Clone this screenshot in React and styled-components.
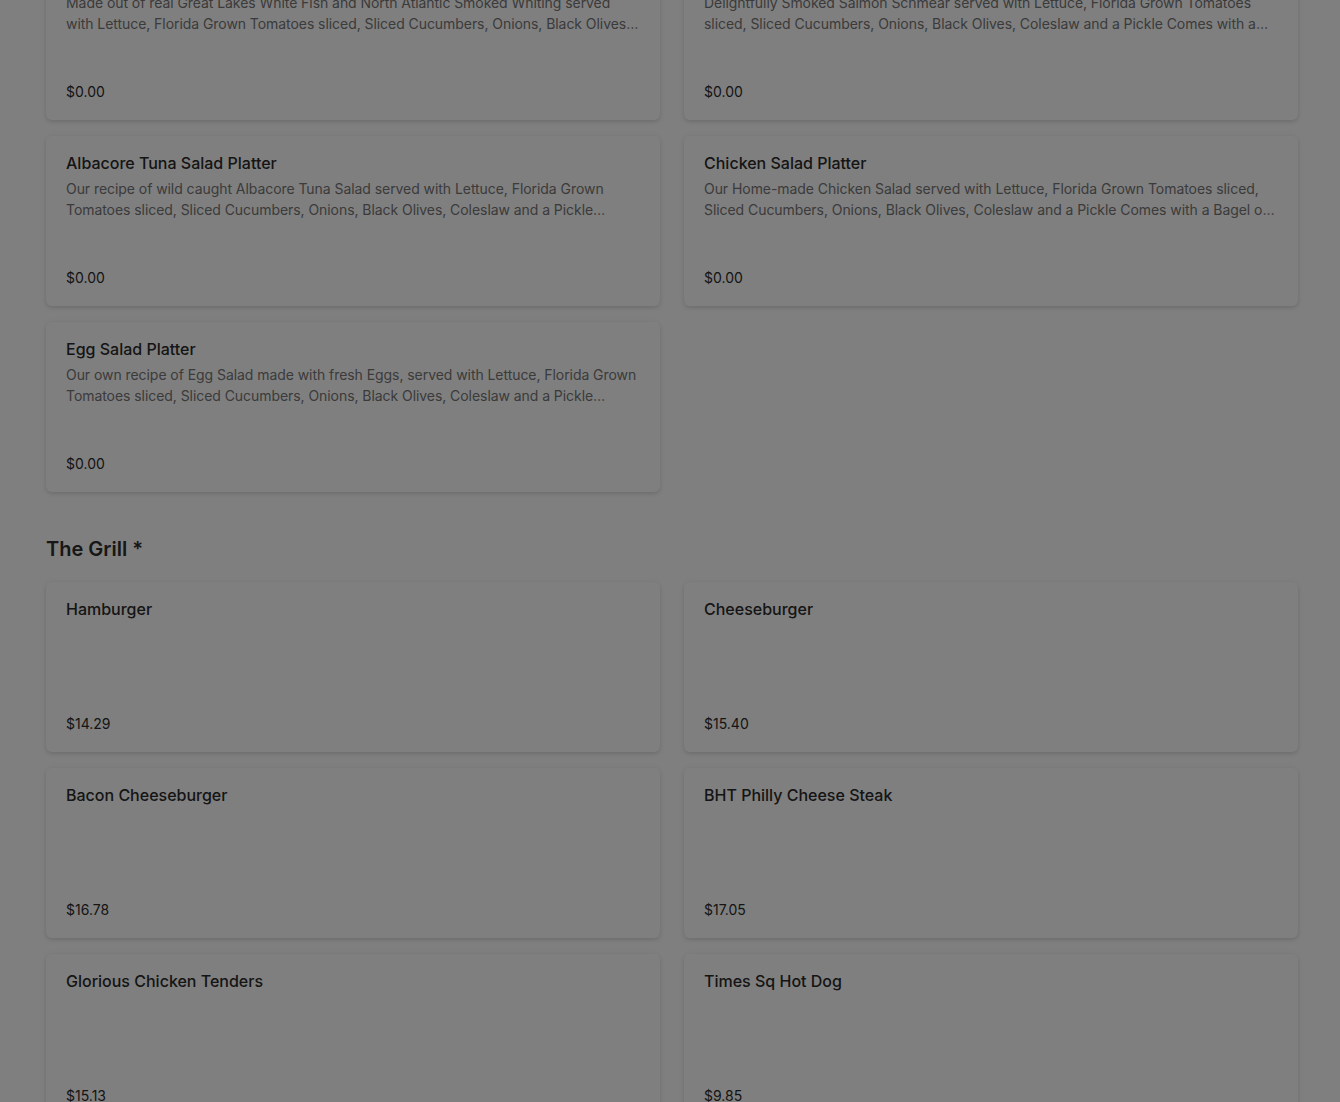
import React from 'react';
import styled, { createGlobalStyle } from 'styled-components';

const GlobalStyle = createGlobalStyle`
  html, body {
    margin: 0;
    padding: 0;
    background: #ffffff;
    font-family: Inter, "Liberation Sans", Arial, sans-serif;
    color: #333333;
    overflow: hidden;
  }
`;

const Page = styled.main`
  width: 1252px;
  padding: 0 42px 40px 46px;
  /* page is scrolled down a little */
  margin-top: -50px;
`;

const Section = styled.section`
  display: flex;
  flex-direction: column;
`;

const SectionTitle = styled.h2`
  margin: 43px 0 19px;
  font-size: 20px;
  line-height: 28px;
  font-weight: 600;
  color: #2e2e2e;
`;

const Grid = styled.div`
  display: grid;
  grid-template-columns: repeat(2, 614px);
  column-gap: 24px;
  row-gap: 16px;
`;

const Card = styled.article`
  box-sizing: border-box;
  height: 170px;
  padding: 16px 20px 18px;
  background: #ffffff;
  border-radius: 6px;
  box-shadow: 0 2px 4px rgba(0, 0, 0, 0.12), 0 0 10px rgba(0, 0, 0, 0.05);
  display: flex;
  flex-direction: column;
`;

const ItemName = styled.h3`
  margin: 0;
  font-size: 16px;
  line-height: 22px;
  font-weight: 500;
  color: #2b2b2b;
`;

const ItemDesc = styled.p`
  margin: 4px 0 0;
  font-size: 14px;
  line-height: 21px;
  letter-spacing: -0.06px;
  color: #767676;
  display: -webkit-box;
  -webkit-line-clamp: 2;
  -webkit-box-orient: vertical;
  overflow: hidden;
`;

const Price = styled.span`
  margin-top: auto;
  font-size: 14px;
  line-height: 20px;
  color: #2b2b2b;
`;

const Overlay = styled.div`
  position: fixed;
  inset: 0;
  background: rgba(0, 0, 0, 0.5);
`;

const tail =
  'served with Lettuce, Florida Grown Tomatoes sliced, Sliced Cucumbers, Onions, Black Olives, Coleslaw and a Pickle Comes with a Bagel of your choice';

const platters = [
  {
    name: 'Whitefish Salad Platter',
    desc: 'Made out of real Great Lakes White Fish and North Atlantic Smoked Whiting ' + tail,
    price: '$0.00',
  },
  {
    name: 'Nova Lox Platter',
    desc: 'Delightfully Smoked Salmon Schmear ' + tail,
    price: '$0.00',
  },
  {
    name: 'Albacore Tuna Salad Platter',
    desc: 'Our recipe of wild caught Albacore Tuna Salad ' + tail,
    price: '$0.00',
  },
  {
    name: 'Chicken Salad Platter',
    desc: 'Our Home-made Chicken Salad ' + tail,
    price: '$0.00',
  },
  {
    name: 'Egg Salad Platter',
    desc: 'Our own recipe of Egg Salad made with fresh Eggs, ' + tail,
    price: '$0.00',
  },
];

const grill = [
  { name: 'Hamburger', price: '$14.29' },
  { name: 'Cheeseburger', price: '$15.40' },
  { name: 'Bacon Cheeseburger', price: '$16.78' },
  { name: 'BHT Philly Cheese Steak', price: '$17.05' },
  { name: 'Glorious Chicken Tenders', price: '$15.13' },
  { name: 'Times Sq Hot Dog', price: '$9.85' },
];

const MenuItem = ({ item }) => (
  <Card>
    <ItemName>{item.name}</ItemName>
    {item.desc && <ItemDesc>{item.desc}</ItemDesc>}
    <Price>{item.price}</Price>
  </Card>
);

const App = () => {
  return (
    <>
      <GlobalStyle />
      <Page>
        <Section>
          <Grid>
            {platters.map(p => (
              <MenuItem key={p.name} item={p} />
            ))}
          </Grid>
        </Section>
        <Section>
          <SectionTitle>The Grill *</SectionTitle>
          <Grid>
            {grill.map(g => (
              <MenuItem key={g.name} item={g} />
            ))}
          </Grid>
        </Section>
      </Page>
      <Overlay />
    </>
  );
};

export default App;
